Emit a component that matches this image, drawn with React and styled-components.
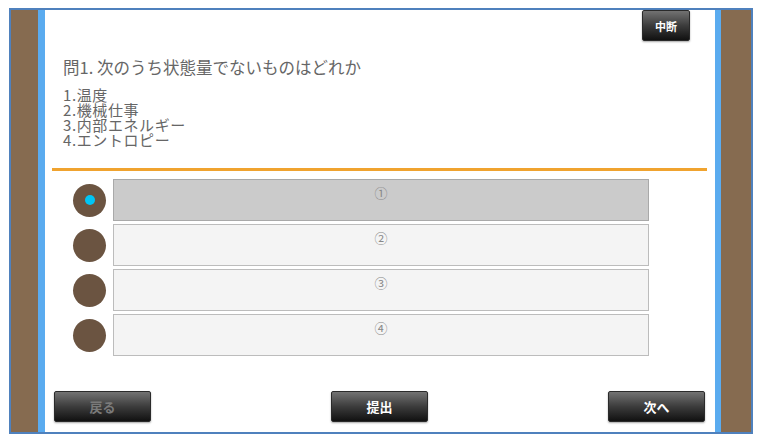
import React, { useState } from 'react'
import styled, { createGlobalStyle } from 'styled-components'

const GlobalStyle = createGlobalStyle`
  html, body {
    margin: 0;
    padding: 0;
    background: #ffffff;
  }
  body {
    font-family: "Noto Sans CJK JP", "Noto Sans", sans-serif;
  }
`

const Frame = styled.div`
  margin: 8px 0 0 9px;
  width: 740px;
  height: 422px;
  border: 2px solid #4f81bd;
  display: flex;
`

const Wood = styled.div`
  width: ${({ $w }) => $w}px;
  background: #866b50;
  flex-shrink: 0;
`

const Rail = styled.div`
  width: ${({ $w }) => $w}px;
  background: #5aabef;
  flex-shrink: 0;
`

const Panel = styled.main`
  flex: 1;
  background: #ffffff;
  display: flex;
  flex-direction: column;
  padding-bottom: 10px;
`

const TopBar = styled.div`
  display: flex;
  justify-content: flex-end;
  padding-right: 25px;
`

const DarkButton = styled.button`
  width: ${({ $w }) => $w}px;
  height: 31px;
  padding: 0;
  border: 1px solid #2a2a2a;
  border-radius: 2px;
  background: linear-gradient(to bottom, #727272 0%, #3c3c3c 50%, #111111 100%);
  box-shadow: 0 1px 2px rgba(0, 0, 0, 0.35);
  color: ${({ disabled }) => (disabled ? '#7a7a7a' : '#ffffff')};
  font-family: "Noto Sans CJK JP", sans-serif;
  font-size: ${({ $fs }) => $fs}px;
  font-weight: 700;
  cursor: pointer;
`

const Question = styled.div`
  padding-left: 18px;
  color: #666666;
`

const Title = styled.p`
  margin: 16px 0 0;
  font-size: 16.5px;
  line-height: 20px;
`

const Choices = styled.ol`
  list-style: none;
  margin: 10px 0 0;
  padding: 0;
  font-size: 15px;
  letter-spacing: 0.6px;
  line-height: 15px;
`

const Divider = styled.hr`
  margin: 21px 8px 0 7px;
  border: none;
  height: 3px;
  background: #f0a32f;
`

const Answers = styled.div`
  margin-top: 8px;
  display: flex;
  flex-direction: column;
  gap: 3px;
`

const Row = styled.div`
  display: flex;
  align-items: center;
  padding-left: 28px;
  gap: 7px;
  cursor: pointer;
`

const Radio = styled.span`
  width: 33px;
  height: 33px;
  border-radius: 50%;
  background: #6b5441;
  display: flex;
  align-items: center;
  justify-content: center;
  flex-shrink: 0;
`

const Dot = styled.span`
  width: 10px;
  height: 10px;
  border-radius: 50%;
  background: #00c6f6;
`

const AnswerBox = styled.div`
  width: 536px;
  height: 42px;
  border: 1px solid ${({ $on }) => ($on ? '#a9a9a9' : '#bcbcbc')};
  background: ${({ $on }) => ($on ? '#cbcbcb' : '#f4f4f4')};
  text-align: center;
  color: #888888;
  font-size: 13px;
  line-height: 16px;
  padding-top: 5px;
  box-sizing: border-box;
`

const BottomBar = styled.div`
  margin-top: auto;
  display: flex;
  justify-content: space-between;
  padding: 0 10px 0 9px;
`

const choices = ['1.温度', '2.機械仕事', '3.内部エネルギー', '4.エントロピー']
const marks = ['①', '②', '③', '④']

export default function App() {
  const [picked, setPicked] = useState(0)

  return (
    <>
      <GlobalStyle />
      <Frame>
        <Wood $w={27} />
        <Rail $w={7} />
        <Panel>
          <TopBar>
            <DarkButton $w={48} $fs={11}>中断</DarkButton>
          </TopBar>
          <Question>
            <Title>問1. 次のうち状態量でないものはどれか</Title>
            <Choices>
              {choices.map((c) => (
                <li key={c}>{c}</li>
              ))}
            </Choices>
          </Question>
          <Divider />
          <Answers>
            {marks.map((m, i) => (
              <Row key={m} onClick={() => setPicked(i)}>
                <Radio>{picked === i && <Dot />}</Radio>
                <AnswerBox $on={picked === i}>{m}</AnswerBox>
              </Row>
            ))}
          </Answers>
          <BottomBar>
            <DarkButton $w={97} $fs={13} disabled>戻る</DarkButton>
            <DarkButton $w={97} $fs={13}>提出</DarkButton>
            <DarkButton $w={97} $fs={13}>次へ</DarkButton>
          </BottomBar>
        </Panel>
        <Rail $w={6} />
        <Wood $w={30} />
      </Frame>
    </>
  )
}
